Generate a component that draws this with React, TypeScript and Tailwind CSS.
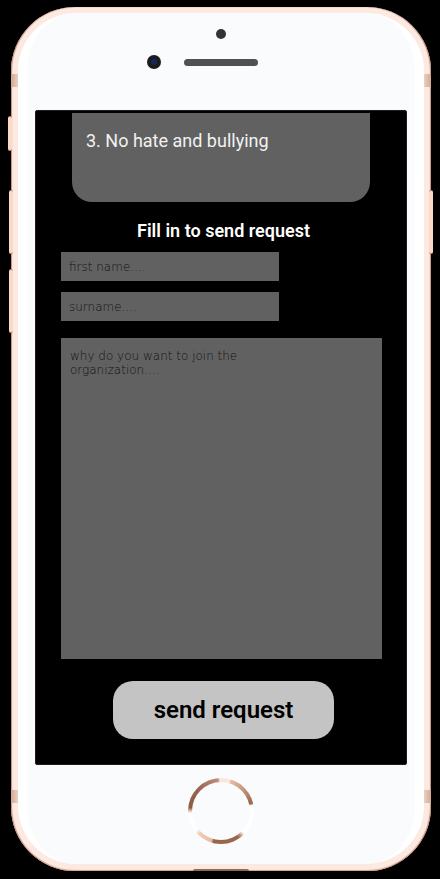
import React from "react";

const fieldClass =
  "block h-[29px] w-[218px] max-w-full bg-[#616161] px-2 font-['DejaVu_Sans',sans-serif] text-[12px] font-extralight text-black outline-none placeholder:text-[#111111]";

function SideButton({ className }: { className: string }) {
  return (
    <span
      className={`absolute w-1 rounded-sm border-y border-[#b98068] bg-[#fbd9c6] ${className}`}
    />
  );
}

function AntennaBand({ className }: { className: string }) {
  return <span className={`absolute h-[13px] w-[7px] from-[#d3a894] to-[#ecd0c0] ${className}`} />;
}

function Earpiece() {
  return (
    <div className="flex h-[97px] flex-col items-center pt-4">
      <span className="size-[10px] rounded-full bg-[#333335]" />
      <div className="mt-4 grid w-full grid-cols-[1fr_74px_1fr] items-center">
        <span className="mr-[23px] flex size-[14px] items-center justify-center justify-self-end rounded-full bg-[#1b1b1d]">
          <span className="size-[6px] rounded-full bg-[#14285c]" />
        </span>
        <span className="h-[7px] rounded-full bg-[#515153]" />
      </div>
    </div>
  );
}

function HomeButton() {
  return (
    <div className="flex h-[99px] justify-center pt-[13px]">
      <button
        type="button"
        aria-label="Home"
        className="size-[66px] rounded-full bg-[conic-gradient(#fbe6dc_0deg_16deg,#e9b9a5_18deg,#c79781_45deg,#98664c_76deg,#ffffff_80deg_134deg,#c08f78_142deg,#98664c_148deg_194deg,#e9bda5_198deg,#f5cbb5_224deg,#ffffff_232deg_266deg,#e9c2b0_270deg,#8e5c44_276deg,#94634c_310deg,#bd8b77_354deg,#fbe6dc_358deg)] p-1"
      >
        <span className="block size-full rounded-full bg-[#fafbfd]" />
      </button>
    </div>
  );
}

function RequestForm() {
  return (
    <form
      className="flex flex-col items-start"
      onSubmit={(event) => event.preventDefault()}
    >
      <h1 className="mt-4 w-full pl-1 text-center text-[18px] leading-[26px] font-semibold text-white">
        Fill in to send request
      </h1>
      <input
        type="text"
        aria-label="First name"
        placeholder="first name...."
        className={`mt-2 ${fieldClass}`}
      />
      <input
        type="text"
        aria-label="Surname"
        placeholder="surname...."
        className={`mt-[11px] ${fieldClass}`}
      />
      <textarea
        aria-label="Why do you want to join the organization"
        placeholder={"why do you want to join the\norganization...."}
        className="mt-[17px] block h-[321px] w-full resize-none bg-[#616161] px-[9px] py-[11px] font-['DejaVu_Sans',sans-serif] text-[12px] leading-[14px] font-extralight text-black outline-none placeholder:text-[#111111]"
      />
      <div className="mt-[22px] flex w-full justify-center pl-1">
        <button
          type="submit"
          className="h-[58px] w-[221px] rounded-[20px] bg-[#c4c4c4] text-[24px] font-semibold text-black"
        >
          send request
        </button>
      </div>
    </form>
  );
}

export default function App() {
  return (
    <div className="min-h-screen bg-black pt-[7px] pr-[9px] pb-2 pl-[11px] font-[Roboto,sans-serif]">
      <div className="relative rounded-[64px] bg-[#fceae2] px-[7px] pt-[6px] pb-[7px] shadow-[inset_1px_0_1px_#c48f78,inset_-1px_0_1px_#c48f78,inset_0_-1px_1px_#dba993]">
        <SideButton className="top-[109px] -left-[3px] h-[35px]" />
        <SideButton className="top-[183px] -left-[2px] h-[64px]" />
        <SideButton className="top-[262px] -left-[2px] h-[64px]" />
        <SideButton className="top-[183px] -right-[2px] h-[64px]" />
        <AntennaBand className="top-[67px] left-0 bg-linear-to-r" />
        <AntennaBand className="top-[67px] right-0 bg-linear-to-l" />
        <AntennaBand className="bottom-[68px] left-0 bg-linear-to-r" />
        <AntennaBand className="right-0 bottom-[68px] bg-linear-to-l" />
        <span className="absolute bottom-0 left-1/2 h-[2px] w-14 -translate-x-1/2 rounded-t-sm bg-[#8a6a5c]" />

        <div className="rounded-[58px] border-x-[9px] border-white bg-[#fafbfd] px-2">
          <Earpiece />
          <main className="rounded-[2px] border border-[#1c1c1f] bg-black pt-[2px] pr-6 pb-[25px] pl-[25px]">
            <section className="mr-3 ml-[11px] h-[89px] rounded-b-[20px] bg-[#616161] px-[14px] pt-4">
              <p className="text-[18px] leading-6 text-[#f2f2f2]">3. No hate and bullying</p>
            </section>
            <RequestForm />
          </main>
          <HomeButton />
        </div>
      </div>
    </div>
  );
}
